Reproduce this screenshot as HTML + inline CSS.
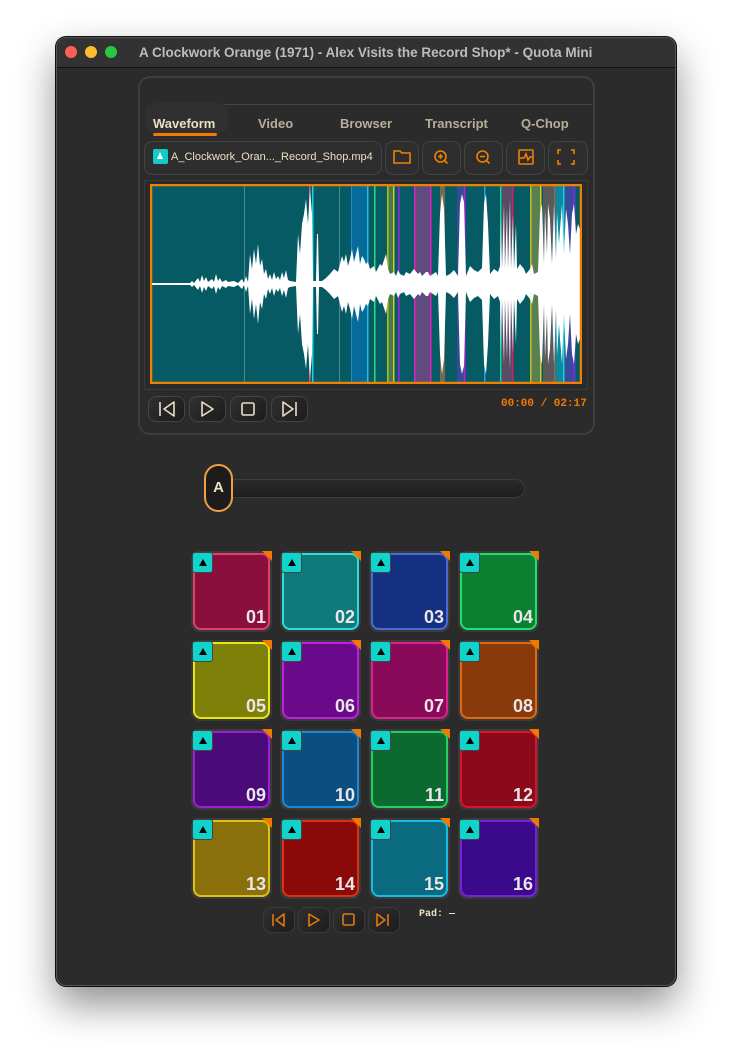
<!DOCTYPE html>
<html><head><meta charset="utf-8"><style>
*{box-sizing:border-box;margin:0;padding:0}
body{width:732px;height:1060px;background:#fff;position:relative;overflow:hidden;font-family:"Liberation Sans",sans-serif}
.abs{position:absolute}
.win{left:56px;top:37px;width:620px;height:949px;background:#2b2b2b;border-radius:10px;border:1px solid #555;box-shadow:0 18px 40px rgba(0,0,0,.45),0 0 0 1px #111;overflow:hidden}
.title{left:0;top:0;width:620px;height:30px;background:#323232;border-bottom:1px solid #111}
.dot{width:12px;height:12px;border-radius:50%;top:8px}
.ttl{left:82px;top:7px;font-size:13.5px;font-weight:bold;color:#bdbdbd;white-space:nowrap}
.panel{left:138px;top:76px;width:457px;height:359px;border:2px solid #3e3e3e;border-radius:12px}
.tab{top:116px;font-size:13px;color:#b8ae9a;font-weight:bold}
.btn{border:1.5px solid #434343;border-radius:8px;background:#2e2e2e}
.tb{background:linear-gradient(135deg,#303030,#1c1c1c);border:1.5px solid #444;border-radius:8px}
.pad{width:81px;height:81px;border-radius:9px;background:#3a3a3a}
.pin{position:absolute;left:2px;top:2px;width:77px;height:77px;border-radius:8px;border:2px solid}
.badge{position:absolute;left:1px;top:1px;width:21px;height:21px;background:#10d4cc;border-radius:3px;border:1px solid #444}
.badge:after{content:"";position:absolute;left:6px;top:6px;border-left:4px solid transparent;border-right:4px solid transparent;border-bottom:7px solid #000}
.corner{position:absolute;right:0;top:0;width:0;height:0;border-left:10px solid transparent;border-top:10px solid #f07a00}
.num{position:absolute;right:6px;bottom:4px;font-size:18px;font-weight:bold;color:#eae6ea}
</style></head><body>
<div class="abs win">
 <div class="abs title">
  <div class="abs dot" style="left:8px;background:#fe5f57"></div>
  <div class="abs dot" style="left:28px;background:#febc2e"></div>
  <div class="abs dot" style="left:48px;background:#28c840"></div>
  <div class="abs ttl">A Clockwork Orange (1971) - Alex Visits the Record Shop* - Quota Mini</div>
 </div>
</div>

<div class="abs panel"></div>
<div class="abs" style="left:204px;top:104px;width:388px;height:1px;background:#444"></div>
<div class="abs" style="left:145px;top:103px;width:83px;height:30px;background:#303030;border-radius:9px"></div>
<div class="abs tab" style="left:153px;color:#ece0c4">Waveform</div>
<div class="abs" style="left:153px;top:133px;width:64px;height:3px;background:#f07a00;border-radius:2px"></div>
<div class="abs tab" style="left:258px">Video</div>
<div class="abs tab" style="left:340px">Browser</div>
<div class="abs tab" style="left:425px">Transcript</div>
<div class="abs tab" style="left:521px">Q-Chop</div>

<div class="abs btn" style="left:144px;top:141px;width:238px;height:34px"></div>
<div class="abs" style="left:153px;top:149px;width:15px;height:15px;background:#12ccc8;border-radius:2px"></div>
<div class="abs" style="left:157px;top:152px;border-left:3.5px solid transparent;border-right:3.5px solid transparent;border-bottom:7px solid #fff"></div>
<div class="abs" style="left:171px;top:151px;font-size:11px;color:#ece0c4;white-space:nowrap">A_Clockwork_Oran..._Record_Shop.mp4</div>
<div class="abs btn" style="left:385px;top:141px;width:34px;height:34px"></div>
<div class="abs btn" style="left:422px;top:141px;width:39px;height:34px"></div>
<div class="abs btn" style="left:464px;top:141px;width:39px;height:34px"></div>
<div class="abs btn" style="left:506px;top:141px;width:39px;height:34px"></div>
<div class="abs btn" style="left:548px;top:141px;width:40px;height:34px"></div>
<svg class="abs" style="left:0;top:0" width="732" height="200" fill="none" stroke="#f08000" stroke-width="1.6">
 <path d="M394 151h6l2 2h8v10h-16z"/>
 <circle cx="440.5" cy="156.5" r="5.5"/><path d="M444.5 160.5l3 3M438 156.5h5M440.5 154v5"/>
 <circle cx="482.5" cy="156.5" r="5.5"/><path d="M486.5 160.5l3 3M480 156.5h5"/>
 <rect x="519" y="150" width="14" height="14" rx="1"/><path d="M520 158h4l2-4 2 6 2-3h3"/>
 <path d="M561 150h-3v4M571 150h3v4M561 164h-3v-4M571 164h3v-4"/>
</svg>

<div class="abs" style="left:144px;top:180px;width:444px;height:210px;border:1px solid #3a3a3a"></div>
<svg class="abs" style="left:150px;top:184px" width="432" height="200">
 <rect width="432" height="200" fill="#055a64"/>
 <rect x="94" width="1" height="200" fill="#4a8a90"/>
 <rect x="159" width="1.5" height="200" fill="#d05080"/><rect x="162" width="1.5" height="200" fill="#20d0e0"/>
 <rect x="189" width="1" height="200" fill="#4a8a90"/>
 <rect x="201" width="16" height="200" fill="#066a9a"/><rect x="201" width="1" height="200" fill="#1a90d0"/>
 <rect x="217" width="1.5" height="200" fill="#20c0e0"/><rect x="224" width="1.5" height="200" fill="#20e080"/>
 <rect x="237" width="7" height="200" fill="#4a7a4a"/><rect x="237" width="1.5" height="200" fill="#b0c020"/><rect x="243" width="1.5" height="200" fill="#d0d020"/>
 <rect x="248" width="1.5" height="200" fill="#b020e0"/>
 <rect x="264" width="16" height="200" fill="#604a80"/><rect x="264" width="1.5" height="200" fill="#e020c0"/><rect x="280" width="1.5" height="200" fill="#e020c0"/>
 <rect x="290" width="5" height="200" fill="#7a6a50"/>
 <rect x="307" width="8" height="200" fill="#3a4a9a"/><rect x="314" width="1.5" height="200" fill="#b020e0"/>
 <rect x="334" width="1.5" height="200" fill="#20a0e0"/>
 <rect x="350" width="1.5" height="200" fill="#20d090"/><rect x="352" width="11" height="200" fill="#5a4a68"/><rect x="362" width="1.5" height="200" fill="#d02060"/>
 <rect x="380" width="11" height="200" fill="#5a8050"/><rect x="380" width="1.5" height="200" fill="#c0c020"/><rect x="390" width="1.5" height="200" fill="#d0d020"/>
 <rect x="393" width="11" height="200" fill="#5a5a5a"/><rect x="404" width="1.5" height="200" fill="#d05040"/>
 <rect x="405" width="8" height="200" fill="#0a8a9a"/><rect x="413" width="1.5" height="200" fill="#20d0f0"/>
 <rect x="415" width="11" height="200" fill="#3a4a9a"/><rect x="423" width="1.5" height="200" fill="#7030e0"/>
 <polygon fill="#fff" points="0,99 40,99 42,97 44,99 48,94 50,98 52,91 54,97 56,93 58,98 62,95 64,98 66,90 68,97 70,94 72,98 76,96 78,98 84,97 88,99 92,95 94,99 96,92 98,98 100,70 102,85 104,65 106,80 108,60 110,82 112,75 114,90 116,85 118,95 120,90 122,96 124,88 126,95 128,92 130,96 132,88 134,94 136,86 138,96 140,97 146,98 148,50 150,70 152,40 154,30 156,15 158,40 160,5 162,30 163,97 166,97 167,50 168,50 169,97 172,97 176,94 180,90 184,85 188,88 190,80 192,72 194,78 196,70 198,82 200,75 202,65 204,78 206,70 208,62 210,80 212,72 214,75 216,80 218,78 220,85 224,82 226,88 230,80 232,82 236,70 238,85 240,90 244,88 246,92 248,86 250,90 254,92 256,88 260,90 264,85 268,90 270,88 272,92 276,88 278,88 280,92 286,88 288,92 290,30 292,10 294,25 296,92 300,90 304,86 308,92 310,20 312,10 314,18 316,92 320,82 324,86 328,88 330,86 332,84 334,20 336,10 338,40 340,90 344,85 348,88 350,82 351,30 352,85 354,20 355,85 357,25 358,85 360,15 361,85 363,30 364,85 366,40 367,85 370,80 374,85 376,90 380,85 382,80 384,90 388,88 390,30 392,20 394,80 395,25 397,70 398,20 400,35 402,80 404,20 406,75 407,28 409,60 410,45 412,20 414,70 416,25 418,40 420,70 422,30 424,20 426,50 428,40 430,45 432,97 432,103 430,155 428,160 426,150 424,180 422,170 420,130 418,160 416,175 414,130 412,180 410,155 409,140 407,172 406,125 404,180 402,120 400,165 398,180 397,130 395,175 394,120 392,180 390,170 388,112 384,110 382,120 380,115 376,110 374,115 370,120 367,115 366,160 364,115 363,170 361,115 360,185 358,115 357,175 355,115 354,180 352,115 351,170 350,118 348,112 344,115 340,110 338,160 336,190 334,180 332,116 330,114 328,112 324,114 320,118 316,108 314,182 312,190 310,180 308,108 304,114 300,110 296,108 294,175 292,190 290,170 288,108 286,112 280,108 278,112 276,112 272,108 270,112 268,110 264,115 260,110 256,112 254,108 250,110 248,114 246,108 244,112 240,110 238,115 236,130 232,118 230,120 226,112 224,118 220,115 218,122 216,120 214,125 212,128 210,120 208,138 206,130 204,122 202,135 200,125 198,118 196,130 194,122 192,128 190,120 188,112 184,115 180,110 176,106 172,103 169,103 168,150 167,150 166,103 163,103 162,170 160,195 158,160 156,185 154,170 152,160 150,130 148,150 146,102 140,103 138,104 136,114 134,106 132,112 130,104 128,108 126,105 124,112 122,104 120,110 118,105 116,115 114,110 112,125 110,118 108,140 106,120 104,135 102,115 100,130 98,102 96,108 94,101 92,105 88,101 84,103 78,102 76,104 72,102 70,106 68,103 66,110 64,102 62,105 58,102 56,107 54,103 52,109 50,102 48,106 44,101 42,103 40,101 0,101"/>
 <rect x="1" y="1" width="430" height="198" fill="none" stroke="#f08000" stroke-width="2.5"/>
</svg>

<div class="abs tb" style="left:148px;top:396px;width:37px;height:26px"></div>
<div class="abs tb" style="left:189px;top:396px;width:37px;height:26px"></div>
<div class="abs tb" style="left:230px;top:396px;width:37px;height:26px"></div>
<div class="abs tb" style="left:271px;top:396px;width:37px;height:26px"></div>
<svg class="abs" style="left:0;top:390" width="732" height="40" fill="none" stroke="#ece0c4" stroke-width="1.6" stroke-linejoin="round">
 <path d="M160 12v14M174 12l-10 7 10 7z"/>
 <path d="M202 12l11 7-11 7z"/>
 <rect x="242" y="13" width="12" height="12" rx="1.5"/>
 <path d="M283 12l10 7-10 7zM296 12v14"/>
</svg>
<div class="abs" style="left:501px;top:398px;font-family:'Liberation Mono',monospace;font-size:11px;font-weight:bold;color:#f07a00">00:00 / 02:17</div>

<div class="abs" style="left:218px;top:479px;width:307px;height:19px;border-radius:10px;background:linear-gradient(#2a2a2a,#1e1e1e);border:1.5px solid #3c3c3c"></div>
<div class="abs" style="left:204px;top:464px;width:29px;height:48px;border-radius:15px;background:#1c1c1c;border:2px solid #f0a040;color:#ece0c4;font-weight:bold;font-size:15px;text-align:center;line-height:44px">A</div>

<div class="abs pad" style="left:191px;top:551px"><div class="pin" style="background:#8a0f3c;border-color:#e0406a"></div><div class="badge"></div><div class="corner"></div><div class="num">01</div></div>
<div class="abs pad" style="left:280px;top:551px"><div class="pin" style="background:#0f7a7a;border-color:#25e0e0"></div><div class="badge"></div><div class="corner"></div><div class="num">02</div></div>
<div class="abs pad" style="left:369px;top:551px"><div class="pin" style="background:#143080;border-color:#4a6ad8"></div><div class="badge"></div><div class="corner"></div><div class="num">03</div></div>
<div class="abs pad" style="left:458px;top:551px"><div class="pin" style="background:#0a8030;border-color:#20e070"></div><div class="badge"></div><div class="corner"></div><div class="num">04</div></div>

<div class="abs pad" style="left:191px;top:640px"><div class="pin" style="background:#7f800a;border-color:#e8e810"></div><div class="badge"></div><div class="corner"></div><div class="num">05</div></div>
<div class="abs pad" style="left:280px;top:640px"><div class="pin" style="background:#6a0a8a;border-color:#c020e0"></div><div class="badge"></div><div class="corner"></div><div class="num">06</div></div>
<div class="abs pad" style="left:369px;top:640px"><div class="pin" style="background:#8a0a5a;border-color:#e02090"></div><div class="badge"></div><div class="corner"></div><div class="num">07</div></div>
<div class="abs pad" style="left:458px;top:640px"><div class="pin" style="background:#8a3a0a;border-color:#e06a10"></div><div class="badge"></div><div class="corner"></div><div class="num">08</div></div>

<div class="abs pad" style="left:191px;top:729px"><div class="pin" style="background:#4a0a7a;border-color:#9a20d0"></div><div class="badge"></div><div class="corner"></div><div class="num">09</div></div>
<div class="abs pad" style="left:280px;top:729px"><div class="pin" style="background:#0a4f7f;border-color:#1a8ad8"></div><div class="badge"></div><div class="corner"></div><div class="num">10</div></div>
<div class="abs pad" style="left:369px;top:729px"><div class="pin" style="background:#0a6a30;border-color:#20d060"></div><div class="badge"></div><div class="corner"></div><div class="num">11</div></div>
<div class="abs pad" style="left:458px;top:729px"><div class="pin" style="background:#8a0a1a;border-color:#e01030"></div><div class="badge"></div><div class="corner"></div><div class="num">12</div></div>

<div class="abs pad" style="left:191px;top:818px"><div class="pin" style="background:#8a700a;border-color:#e0c010"></div><div class="badge"></div><div class="corner"></div><div class="num">13</div></div>
<div class="abs pad" style="left:280px;top:818px"><div class="pin" style="background:#8a0a0a;border-color:#e03010"></div><div class="badge"></div><div class="corner"></div><div class="num">14</div></div>
<div class="abs pad" style="left:369px;top:818px"><div class="pin" style="background:#0a6a80;border-color:#10c0e0"></div><div class="badge"></div><div class="corner"></div><div class="num">15</div></div>
<div class="abs pad" style="left:458px;top:818px"><div class="pin" style="background:#3a0a8a;border-color:#7a20e0"></div><div class="badge"></div><div class="corner"></div><div class="num">16</div></div>

<div class="abs tb" style="left:263px;top:907px;width:32px;height:26px;border-color:#3a3a3a"></div>
<div class="abs tb" style="left:298px;top:907px;width:32px;height:26px;border-color:#3a3a3a"></div>
<div class="abs tb" style="left:333px;top:907px;width:32px;height:26px;border-color:#3a3a3a"></div>
<div class="abs tb" style="left:368px;top:907px;width:32px;height:26px;border-color:#3a3a3a"></div>
<svg class="abs" style="left:0;top:900" width="732" height="40" fill="none" stroke="#e07a10" stroke-width="1.6" stroke-linejoin="round">
 <path d="M273 14v12M284 14l-8 6 8 6z"/>
 <path d="M309 14l10 6-10 6z"/>
 <rect x="343" y="14" width="11" height="11" rx="1.5"/>
 <path d="M377 14l8 6-8 6zM388 14v12"/>
</svg>
<div class="abs" style="left:419px;top:909px;font-family:'Liberation Mono',monospace;font-size:10px;font-weight:bold;color:#ece0c4">Pad: —</div>
</body></html>
